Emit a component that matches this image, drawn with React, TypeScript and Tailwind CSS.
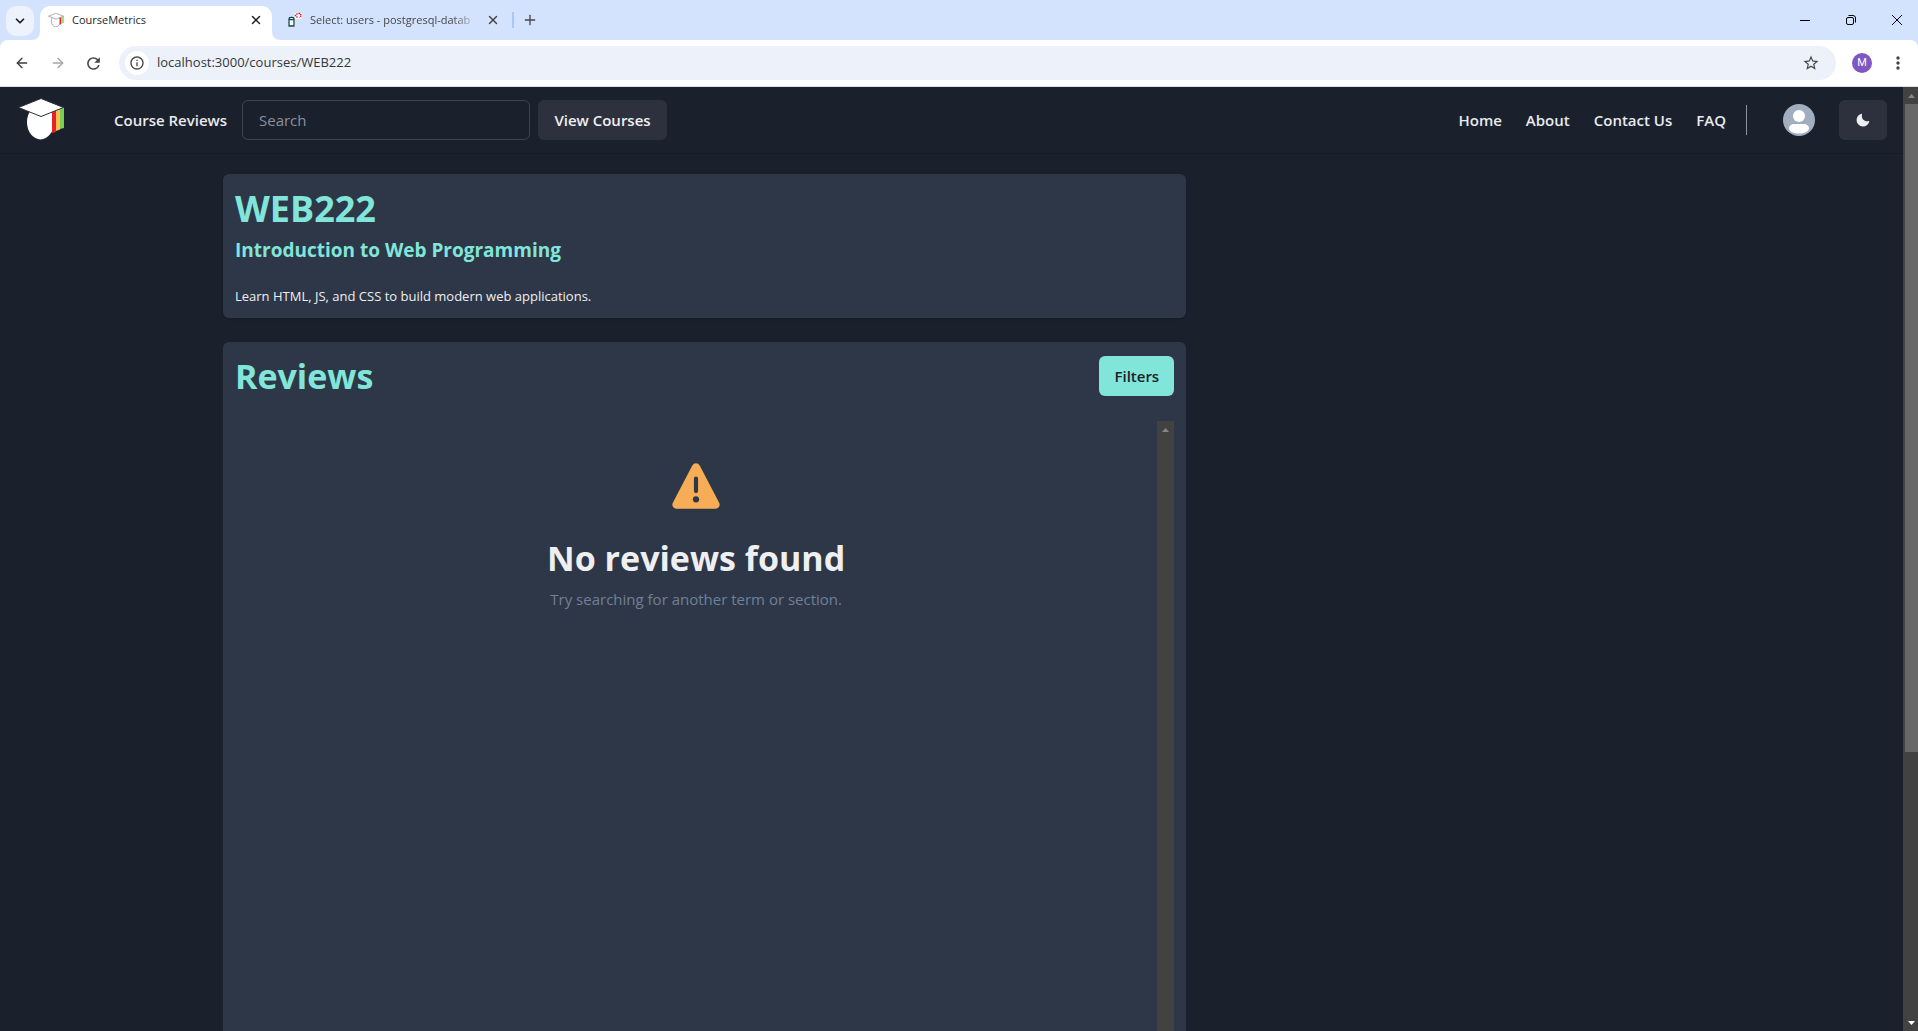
import { ArrowLeft, ArrowRight, ChevronDown, Plus, X } from "lucide-react";
import { MdInfoOutline, MdMoreVert, MdRefresh, MdStarOutline } from "react-icons/md";

function CapLogo({ className, outlined = false }: { className: string; outlined?: boolean }) {
  const stroke = outlined ? "#8b8b8b" : "#2a2f3a";
  return (
    <svg viewBox="0 0 46 42" className={className} aria-hidden="true">
      <path d="M38 12 L42 11 V31.5 L38 33 Z" fill="#fbc04f" />
      <path d="M42 10.500 L46 9 V30 L42 31 Z" fill="#79cf52" />
      <ellipse cx="22.500" cy="24" rx="13.500" ry="17.500" fill="#fff" stroke={outlined ? stroke : "none"} strokeWidth="2" />
      <path d="M34 12 H38 V34 L34 35 Z" fill="#e8202a" />
      <path d="M0.500 9.500 L23 0.500 L45.500 9.500 L23 18.500 Z" fill="#fff" stroke={stroke} strokeWidth={outlined ? 2 : 1} />
    </svg>
  );
}

function DatabaseIcon() {
  return (
    <svg viewBox="0 0 16 16" className="size-4 shrink-0" aria-hidden="true">
      <path d="M1 5 H8 V15 H1 Z M8 1 H15 V7 H8 Z" fill="#fff" />
      <path d="M2 7 V14 H7 V7" fill="#fff" stroke="#0b4453" strokeWidth="1.300" />
      <ellipse cx="4.500" cy="6.500" rx="2.500" ry="1.200" fill="#fff" stroke="#0b4453" strokeWidth="1.200" />
      <path d="M10.500 1.500 L8.500 3.500 L10.500 5.500 M11.500 1.500 H13 L14.500 3.500 L12.500 5.500" fill="none" stroke="#e3131b" strokeWidth="1.300" strokeDasharray="1.500 0.600" />
    </svg>
  );
}

function TabStrip() {
  return (
    <div className="flex h-10 items-end overflow-hidden bg-[#d3e2fd] text-[#1f1f1f]">
      <button aria-label="Search tabs" className="mb-1 ml-1.5 flex h-[30px] w-7 items-center justify-center rounded-[10px] bg-[#edf2fc]">
        <ChevronDown className="size-3.5" strokeWidth={3} />
      </button>
      <div className="-ml-0.5 flex h-[34px] items-end">
        <svg viewBox="0 0 8 8" className="size-2 shrink-0 text-white" aria-hidden="true">
          <path d="M8 0 A8 8 0 0 1 0 8 H8 Z" fill="currentColor" />
        </svg>
        <div className="flex h-[34px] w-[232px] items-center rounded-t-[10px] bg-white pr-[9px] pb-1.5 pl-2 text-[11px]">
          <CapLogo className="h-3.5 w-4 shrink-0" outlined />
          <span className="ml-2 grow">CourseMetrics</span>
          <button aria-label="Close CourseMetrics tab">
            <X className="size-3.5" strokeWidth={2.500} />
          </button>
        </div>
        <svg viewBox="0 0 8 8" className="size-2 shrink-0 text-white" aria-hidden="true">
          <path d="M0 0 A8 8 0 0 0 8 8 H0 Z" fill="currentColor" />
        </svg>
      </div>
      <div className="flex h-[34px] items-center pb-1.5 pl-[7px] text-[11px] text-[#474747]">
        <DatabaseIcon />
        <span className="ml-[7px] w-[168px] overflow-hidden whitespace-nowrap [mask-image:linear-gradient(to_right,black_85%,transparent)]">
          Select: users - postgresql-datab
        </span>
        <button aria-label="Close Select: users tab" className="ml-2">
          <X className="size-3.5" strokeWidth={2.500} />
        </button>
        <span className="ml-3 h-4 w-0.5 bg-[#a8c7fa]" />
        <button aria-label="New tab" className="ml-2">
          <Plus className="size-4" />
        </button>
      </div>
      <div className="-mr-0.5 ml-auto flex h-10 text-black">
        <button aria-label="Minimize" className="flex w-[46px] items-center justify-center">
          <svg viewBox="0 0 10 10" className="size-2.5"><path d="M0 5.500 H10" stroke="currentColor" /></svg>
        </button>
        <button aria-label="Restore" className="flex w-[46px] items-center justify-center">
          <svg viewBox="0 0 10 10" className="size-2.5 overflow-visible" fill="none" stroke="currentColor">
            <rect x="0.500" y="2.500" width="7" height="7" rx="1.500" />
            <path d="M2.500 0.500 H7 A2.500 2.500 0 0 1 9.500 3 V7.500" />
          </svg>
        </button>
        <button aria-label="Close window" className="flex w-[46px] items-center justify-center">
          <svg viewBox="0 0 10 10" className="size-2.5"><path d="M0 0 L10 10 M10 0 L0 10" stroke="currentColor" /></svg>
        </button>
      </div>
    </div>
  );
}

function Toolbar() {
  return (
    <div className="bg-[#d3e2fd]">
      <div className="flex h-[47px] items-center rounded-t-lg border-b border-[#dcdfe4] bg-white pl-3.5 text-[#474747]">
        <button aria-label="Back" className="text-[#3c3c3c]"><ArrowLeft className="size-4" /></button>
        <button aria-label="Forward" className="ml-5 text-[#a6a6a6]"><ArrowRight className="size-4" /></button>
        <button aria-label="Reload" className="ml-[18px]"><MdRefresh className="size-[19px]" /></button>
        <div className="ml-4 flex h-[34px] grow items-center rounded-full bg-[#ecf1fa] pr-4 pl-1.5">
          <button aria-label="View site information" className="flex size-6 items-center justify-center rounded-full bg-white">
            <MdInfoOutline className="size-4" />
          </button>
          <input aria-label="Address" defaultValue="localhost:3000/courses/WEB222" className="ml-2 grow bg-transparent text-[13px] text-[#33363a] outline-none" />
          <button aria-label="Bookmark this page"><MdStarOutline className="size-[18px]" /></button>
        </div>
        <button aria-label="Profile" className="ml-4 flex size-5 items-center justify-center rounded-full bg-[#7e57c2] font-['Roboto',sans-serif] text-[11px] text-white">
          M
        </button>
        <button aria-label="Menu" className="mr-2.5 ml-4"><MdMoreVert className="size-5" /></button>
      </div>
    </div>
  );
}

const links = ["Home", "About", "Contact Us", "FAQ"];

function Header() {
  return (
    <header className="flex h-[67px] items-center border-b border-[#171923] pr-4 pl-[18px] text-[15px] font-semibold text-[#e8eaee]">
      <a href="#home" aria-label="CourseMetrics home" className="mb-0.5">
        <CapLogo className="h-[42px] w-[46px]" />
      </a>
      <a href="#reviews" className="ml-[50px] w-32 whitespace-nowrap">Course Reviews</a>
      <input
        aria-label="Search"
        placeholder="Search"
        className="h-10 w-72 rounded-md border border-[#3f434e] bg-transparent px-4 font-normal outline-none placeholder:text-[#8b919c]"
      />
      <button className="ml-2 h-10 w-[129px] rounded-md bg-[#2d313d] text-[#efeff1]">View Courses</button>
      <nav className="ml-auto flex gap-6">
        {links.map((l) => (
          <a key={l} href="#nav">{l}</a>
        ))}
      </nav>
      <span className="ml-5 h-[30px] w-px bg-[#8d929b]" />
      <button aria-label="Account" className="ml-9">
        <svg viewBox="0 0 32 32" className="size-8">
          <circle cx="16" cy="16" r="16" fill="#a0aec0" />
          <circle cx="16" cy="12" r="6" fill="#fff" />
          <path d="M6 24.500 C6 21.500 8.500 20 11 20 H21 C23.500 20 26 21.500 26 24.500 C26 27.500 21 29.500 16 29.500 C11 29.500 6 27.500 6 24.500 Z" fill="#fff" />
        </svg>
      </button>
      <button aria-label="Toggle color mode" className="ml-6 flex h-10 w-12 items-center justify-center rounded-md bg-[#2d313d] text-[#efeff1]">
        <svg viewBox="0 0 24 24" className="size-3.5" fill="currentColor">
          <path d="M21.4,13.7C20.6,13.9,19.8,14,19,14c-5,0-9-4-9-9c0-0.8,0.1-1.6,0.3-2.4c0.1-0.3,0-0.7-0.3-1c-0.3-0.3-0.6-0.4-1-0.3C4.3,2.7,1,7.1,1,12c0,6.1,4.9,11,11,11c4.9,0,9.3-3.3,10.6-8.1c0.1-0.3,0-0.7-0.3-1C22.1,13.7,21.7,13.6,21.4,13.7z" />
        </svg>
      </button>
    </header>
  );
}

function CourseCard() {
  return (
    <section className="rounded-md bg-[#2d3748] px-3 pt-[13px] pb-[11px] shadow">
      <h1 className="text-4xl leading-[43px] font-bold text-[#81e6d9]">WEB222</h1>
      <h2 className="mt-2 text-[19px] leading-6 font-bold text-[#81e6d9]">Introduction to Web Programming</h2>
      <p className="mt-6 text-[13px] leading-[21px] text-[#efeff1]">Learn HTML, JS, and CSS to build modern web applications.</p>
    </section>
  );
}

function ReviewsCard() {
  return (
    <section className="flex min-h-0 grow flex-col rounded-t-md bg-[#2d3748] px-3 pt-3.5">
      <div className="flex items-center justify-between">
        <h2 className="text-[34px] leading-10 font-bold text-[#81e6d9]">Reviews</h2>
        <button className="h-10 w-[75px] rounded-md bg-[#81e6d9] text-[15px] font-semibold text-[#1a202c]">Filters</button>
      </div>
      <div className="mt-[25px] flex grow">
        <div className="flex grow flex-col items-center pt-10">
          <svg viewBox="0 0 24 24" className="size-[50px] text-[#f6ad55]" fill="currentColor" aria-hidden="true">
            <path d="M23.119,20,13.772,2.15h0a2,2,0,0,0-3.543,0L.881,20a2,2,0,0,0,1.772,2.928H21.347A2,2,0,0,0,23.119,20ZM11,8.423a1,1,0,0,1,2,0v6a1,1,0,1,1-2,0Zm1.05,11.51h-.028a1.528,1.528,0,0,1-1.522-1.47,1.476,1.476,0,0,1,1.448-1.53h.028A1.527,1.527,0,0,1,13.5,18.4,1.475,1.475,0,0,1,12.05,19.933Z" />
          </svg>
          <h3 className="mt-[26px] text-[34px] leading-[43px] font-bold text-[#efeff1]">No reviews found</h3>
          <p className="mt-[7px] text-[15px] leading-6 text-[#718096]">Try searching for another term or section.</p>
        </div>
        <div className="flex w-[17px] justify-center bg-[#424242] pt-[7px]" aria-hidden="true">
          <svg viewBox="0 0 7 4" className="h-1 w-[7px]"><path d="M0 4 L3.500 0 L7 4 Z" fill="#868686" /></svg>
        </div>
      </div>
    </section>
  );
}

function PageScrollbar() {
  return (
    <div className="flex w-[15px] shrink-0 flex-col items-center bg-[#424242] pl-0.5" aria-hidden="true">
      <div className="flex h-[17px] items-center">
        <svg viewBox="0 0 7 4" className="h-1 w-[7px]"><path d="M0 4 L3.500 0 L7 4 Z" fill="#868686" /></svg>
      </div>
      <div className="h-[calc(69%-3px)] w-full bg-[#686868]" />
      <div className="mt-auto flex h-[17px] items-center">
        <svg viewBox="0 0 7 4" className="h-1 w-[7px]"><path d="M0 0 L3.500 4 L7 0 Z" fill="#fff" /></svg>
      </div>
    </div>
  );
}

export default function App() {
  return (
    <div className="flex h-screen flex-col overflow-hidden bg-[#1a202c] font-['Open_Sans',sans-serif]">
      <TabStrip />
      <Toolbar />
      <div className="flex min-h-0 grow">
        <div className="flex min-w-0 grow flex-col">
          <Header />
          <main className="mx-auto grid min-h-0 w-full max-w-[1457px] grow grid-cols-3 gap-6 pt-5">
            <div className="col-span-2 flex min-h-0 flex-col gap-6">
              <CourseCard />
              <ReviewsCard />
            </div>
          </main>
        </div>
        <PageScrollbar />
      </div>
    </div>
  );
}
